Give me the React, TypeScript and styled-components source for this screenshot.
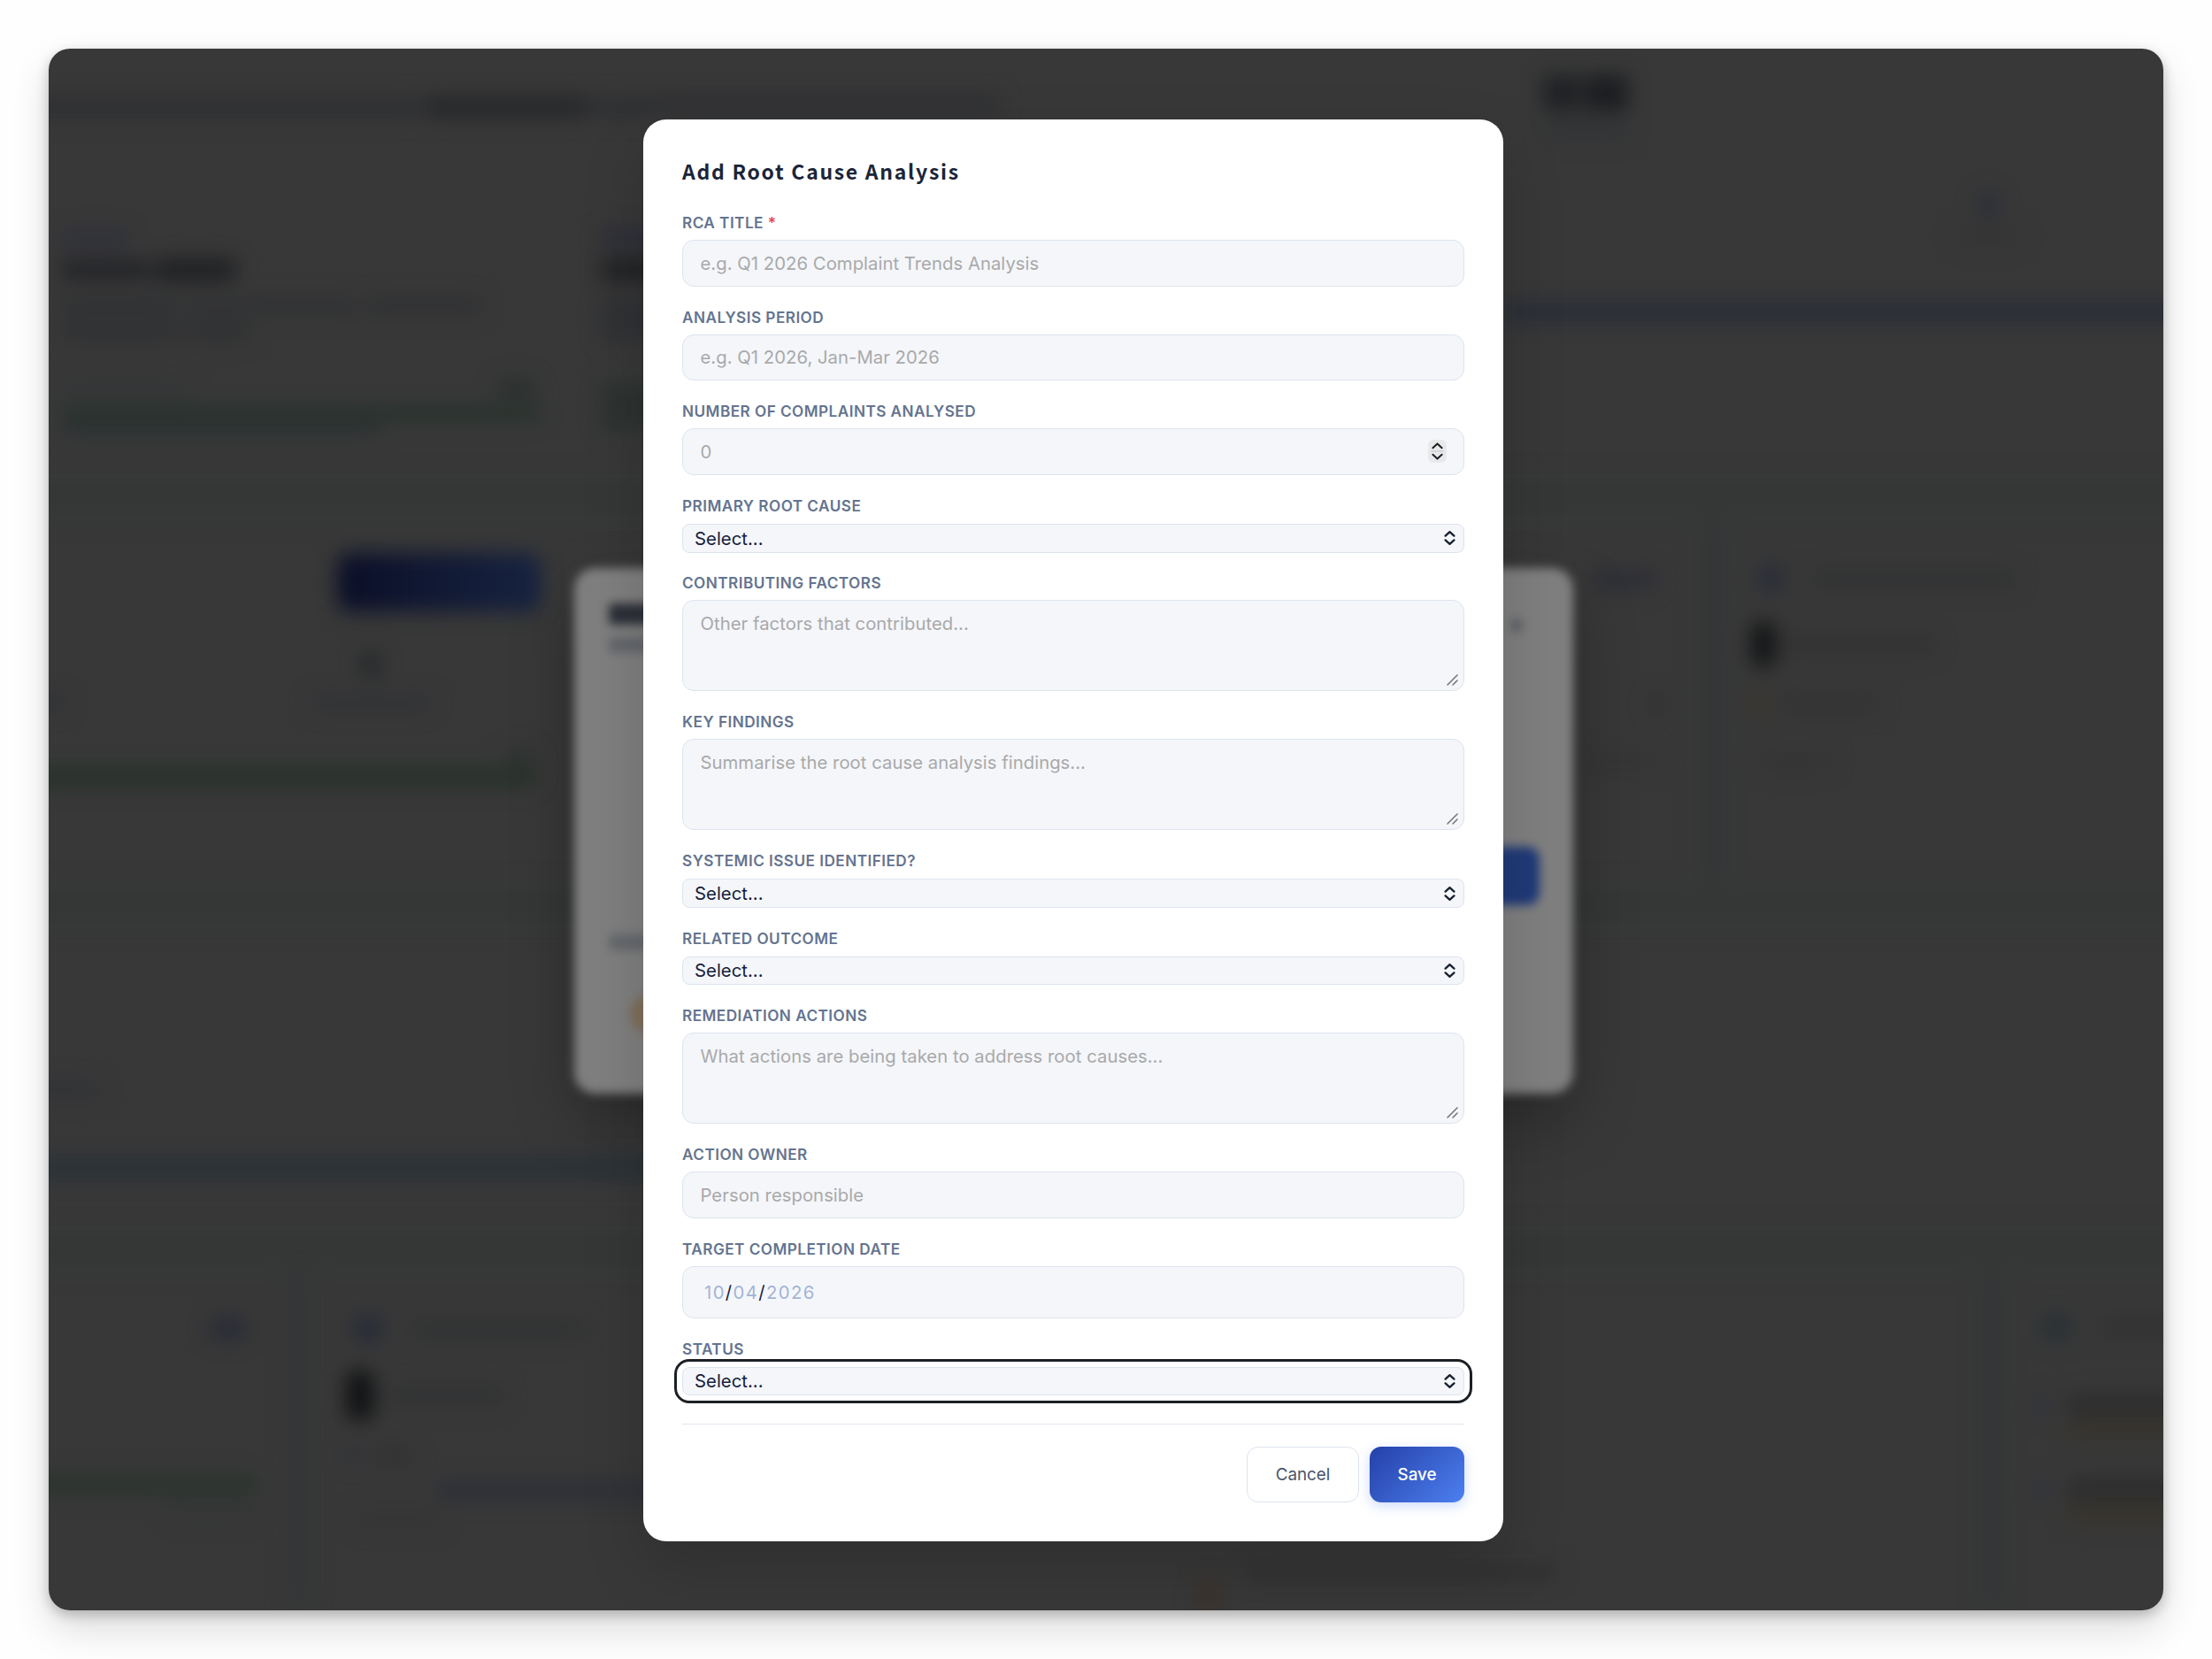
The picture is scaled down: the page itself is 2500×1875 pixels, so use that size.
import styled, { createGlobalStyle } from "styled-components"

const GlobalStyle = createGlobalStyle`
    *, *::before, *::after {
        box-sizing: border-box;
    }

    body {
        margin: 0;
        background: #fefefe;
        font-family: Inter, "Liberation Sans", sans-serif;
    }
`

const Page = styled.main`
    width: 2500px;
    height: 1875px;
    padding: 55px;
    overflow: hidden;
`

const Frame = styled.div`
    position: relative;
    width: 2390px;
    height: 1765px;
    border-radius: 24px;
    box-shadow:
        0 20px 44px rgba(0, 0, 0, 0.14),
        0 5px 14px rgba(0, 0, 0, 0.22);
`

const Clip = styled.div`
    position: relative;
    height: 100%;
    border-radius: 24px;
    background: #383838;
    overflow: hidden;
`

/* ---- dashboard behind the dialogs ---- */

const Board = styled.div`
    display: flex;
    width: 2390px;
    height: 1765px;
    filter: blur(11px);
`

const Side = styled.div<{ $w: number }>`
    flex: none;
    width: ${(p) => p.$w}px;
    display: flex;
    flex-direction: column;
`

const Band = styled.div<{ $h: number }>`
    flex: none;
    height: ${(p) => p.$h}px;
    display: flex;
`

// bleeds past the frame so the blur stays even at the edges
const Gutter = styled.div`
    flex: none;
    height: 45px;
    margin: 0 -40px;
    background: #353737;
`

const Seam = styled.div`
    flex: none;
    width: 26px;
    background: #343637;
`

const Panel = styled.div<{ $w: number; $pl?: number }>`
    flex: none;
    width: ${(p) => p.$w}px;
    padding-left: ${(p) => p.$pl ?? 0}px;
    overflow: visible;
`

const Line = styled.div<{ $top: number; $h: number }>`
    display: flex;
    align-items: center;
    height: ${(p) => p.$h}px;
    margin-top: ${(p) => p.$top}px;
`

const Smudge = styled.div<{ $w: number; $c: string; $ml?: number; $h?: number; $r?: number }>`
    flex: none;
    width: ${(p) => p.$w}px;
    height: ${(p) => (p.$h ? `${p.$h}px` : "100%")};
    margin-left: ${(p) => p.$ml ?? 0}px;
    border-radius: ${(p) => p.$r ?? 4}px;
    background: ${(p) => p.$c};
`

const LowerDialog = styled.div`
    position: absolute;
    left: 594px;
    top: 587px;
    width: 1129px;
    height: 594px;
    display: flex;
    justify-content: space-between;
    border-radius: 24px;
    background: #7f7f7f;
    box-shadow: 0 30px 70px rgba(0, 0, 0, 0.28);
    filter: blur(5.5px);
`

/* ---- modal ---- */

const Modal = styled.section`
    position: absolute;
    left: 672px;
    top: 80px;
    width: 972px;
    height: 1607px;
    padding: 44px;
    border-radius: 26px;
    background: #fff;
    box-shadow: 0 28px 70px rgba(0, 0, 0, 0.16);
`

const Title = styled.h2`
    margin: 0;
    height: 62px;
    line-height: 29px;
    font-family: "Noto Sans CJK SC", "Open Sans", sans-serif;
    font-size: 23px;
    font-weight: 700;
    letter-spacing: 1.7px;
    color: #1b2538;
`

const Field = styled.div`
    margin-bottom: 24px;
`

const Label = styled.label`
    display: block;
    height: 22px;
    margin-bottom: 8px;
    line-height: 22px;
    font-size: 17.2px;
    font-weight: 600;
    letter-spacing: 0.45px;
    color: #64748f;
`

const Required = styled.span`
    color: #e5484d;
`

const Input = styled.div<{ $h?: number }>`
    display: flex;
    align-items: center;
    justify-content: space-between;
    height: ${(p) => p.$h ?? 52.6}px;
    padding: 0 19.5px;
    border: 1.5px solid #dde4ee;
    border-radius: 13px;
    background: #f4f6fa;
    font-size: 20.3px;
    letter-spacing: 0.03px;
    color: #a9a9a9;
`

const TextArea = styled(Input)`
    height: 103px;
    align-items: flex-start;
    padding: 11px 6px 5px 19.5px;
    line-height: 29px;
`

const Handle = styled.svg`
    align-self: flex-end;
    width: 13px;
    height: 13px;
`

const Select = styled(Input)<{ $focused?: boolean }>`
    height: 32.8px;
    margin-top: 9px;
    margin-bottom: 23.6px;
    padding: 0 9px 0 13px;
    border-radius: 8px;
    color: #16203a;
    outline: ${(p) => (p.$focused ? "3px solid #1b2025" : "none")};
    outline-offset: 6.5px;
`

const SelectField = styled(Field)`
    margin-bottom: 0;
`

const Stepper = styled.span`
    display: flex;
    flex-direction: column;
    justify-content: center;
    align-items: center;
    width: 21px;
    height: 26px;
    border-radius: 6px;
    background: #e8e9eb;
`

const DateText = styled.span`
    margin-left: 4.5px;
    letter-spacing: 1.4px;
    color: #a3b4d4;
`

const Slash = styled.span`
    color: #16203a;
`

const Footer = styled.footer`
    display: flex;
    justify-content: flex-end;
    gap: 12px;
    margin-top: 32px;
    padding-top: 25px;
    border-top: 1.5px solid #dfe5ee;
`

const Button = styled.button<{ $primary?: boolean }>`
    width: ${(p) => (p.$primary ? 107 : 127)}px;
    height: 63px;
    padding: 0;
    border: ${(p) => (p.$primary ? "none" : "1.5px solid #dde4ee")};
    border-radius: 13px;
    background: ${(p) => (p.$primary ? "linear-gradient(135deg, #2540a8, #4c80f0)" : "#fff")};
    box-shadow: ${(p) => (p.$primary ? "0 4px 14px rgba(59, 110, 240, 0.26)" : "none")};
    font-family: inherit;
    font-size: 18.8px;
    font-weight: ${(p) => (p.$primary ? 500 : 400)};
    color: ${(p) => (p.$primary ? "#fff" : "#475569")};
`

const Chevrons = () => (
    <svg width="13" height="18" viewBox="0 0 13 18" fill="none" stroke="#16202f" strokeWidth="2.3" strokeLinecap="round" strokeLinejoin="round">
        <path d="M1.6 6.6L6.5 2.1L11.4 6.6M1.6 11.4L6.5 15.9L11.4 11.4" />
    </svg>
)

const StepperIcon = () => (
    <Stepper>
        <svg width="15" height="22" viewBox="0 0 15 22" fill="none" strokeLinecap="round" strokeLinejoin="round">
            <path d="M1 11H14" stroke="#cfd0d2" strokeWidth="1.3" />
            <path d="M2.4 7.2L7.5 2.4L12.6 7.2M2.4 14.8L7.5 19.6L12.6 14.8" stroke="#1f1f1f" strokeWidth="2" />
        </svg>
    </Stepper>
)

const TextAreaBox = ({ text }: { text: string }) => (
    <TextArea>
        <span>{text}</span>
        <Handle viewBox="0 0 13 13" stroke="#787878" strokeWidth="1.6" strokeLinecap="round">
            <path d="M1 12L12 1M7 12L12 7" />
        </Handle>
    </TextArea>
)

type FieldDef = {
    label: string
    kind: "text" | "number" | "select" | "area" | "date"
    text?: string
    required?: boolean
    focused?: boolean
}

const fields: FieldDef[] = [
    { label: "RCA TITLE", kind: "text", text: "e.g. Q1 2026 Complaint Trends Analysis", required: true },
    { label: "ANALYSIS PERIOD", kind: "text", text: "e.g. Q1 2026, Jan-Mar 2026" },
    { label: "NUMBER OF COMPLAINTS ANALYSED", kind: "number", text: "0" },
    { label: "PRIMARY ROOT CAUSE", kind: "select" },
    { label: "CONTRIBUTING FACTORS", kind: "area", text: "Other factors that contributed..." },
    { label: "KEY FINDINGS", kind: "area", text: "Summarise the root cause analysis findings..." },
    { label: "SYSTEMIC ISSUE IDENTIFIED?", kind: "select" },
    { label: "RELATED OUTCOME", kind: "select" },
    { label: "REMEDIATION ACTIONS", kind: "area", text: "What actions are being taken to address root causes..." },
    { label: "ACTION OWNER", kind: "text", text: "Person responsible" },
    { label: "TARGET COMPLETION DATE", kind: "date" },
    { label: "STATUS", kind: "select", focused: true },
]

const Control = ({ field }: { field: FieldDef }) => {
    switch (field.kind) {
        case "area":
            return <TextAreaBox text={field.text ?? ""} />
        case "select":
            return (
                <Select $focused={field.focused}>
                    <span>Select...</span>
                    <Chevrons />
                </Select>
            )
        case "date":
            return (
                <Input $h={59}>
                    <DateText>
                        10<Slash>/</Slash>04<Slash>/</Slash>2026
                    </DateText>
                </Input>
            )
        default:
            return (
                <Input>
                    <span>{field.text}</span>
                    {field.kind === "number" && <StepperIcon />}
                </Input>
            )
    }
}

const LeftSide = () => (
    <Side $w={672}>
        <Band $h={485}>
            <Panel $w={585}>
                <Line $top={54} $h={24}>
                    <Smudge $w={460} $ml={-40} $c="#2f3032" />
                    <Smudge $w={185} $ml={5} $c="#27282b" />
                    <Smudge $w={62} $ml={5} $c="#2f3033" />
                </Line>
                <Line $top={127} $h={18}>
                    <Smudge $w={74} $ml={15} $c="#2f303a" />
                </Line>
                <Line $top={14} $h={26}>
                    <Smudge $w={100} $ml={15} $c="#232428" $h={22} />
                    <Smudge $w={90} $ml={6} $c="#202124" />
                </Line>
                <Line $top={18} $h={20}>
                    <Smudge $w={130} $ml={15} $c="#303133" />
                    <Smudge $w={200} $ml={8} $c="#313234" />
                    <Smudge $w={130} $ml={7} $c="#303133" />
                </Line>
                <Line $top={9} $h={20}>
                    <Smudge $w={130} $ml={15} $c="#303133" />
                    <Smudge $w={74} $ml={8} $c="#303133" />
                </Line>
                <Line $top={44} $h={20}>
                    <Smudge $w={145} $ml={15} $c="#323436" $h={14} />
                    <Smudge $w={44} $ml={347} $c="#2a302e" />
                </Line>
                <Line $top={11} $h={15}>
                    <Smudge $w={540} $ml={15} $c="#25322b" />
                </Line>
                <Line $top={0} $h={18}>
                    <Smudge $w={360} $ml={15} $c="#2f3234" />
                </Line>
            </Panel>
            <Panel $w={87} $pl={40}>
                <Line $top={205} $h={18}>
                    <Smudge $w={74} $c="#2c2d39" />
                </Line>
                <Line $top={14} $h={26}>
                    <Smudge $w={80} $c="#202124" />
                </Line>
                <Line $top={18} $h={50}>
                    <Smudge $w={80} $c="#303134" />
                </Line>
                <Line $top={46} $h={56}>
                    <Smudge $w={80} $c="#2d3231" />
                </Line>
            </Panel>
        </Band>
        <Gutter />
        <Band $h={415}>
            <Panel $w={672}>
                <Line $top={40} $h={66}>
                    <Smudge $w={230} $ml={326} $r={14} $c="linear-gradient(90deg, #0b0f28, #172340)" />
                </Line>
                <Line $top={46} $h={28}>
                    <Smudge $w={20} $ml={354} $c="#242729" />
                </Line>
                <Line $top={20} $h={18}>
                    <Smudge $w={60} $ml={-40} $c="#313236" />
                    <Smudge $w={136} $ml={276} $c="#313236" />
                </Line>
                <Line $top={44} $h={20}>
                    <Smudge $w={34} $ml={516} $c="#2f3331" />
                </Line>
                <Line $top={2} $h={20}>
                    <Smudge $w={590} $ml={-40} $c="#26322a" />
                </Line>
            </Panel>
        </Band>
        <Gutter />
        <Band $h={345}>
            <Panel $w={672}>
                <Line $top={178} $h={18}>
                    <Smudge $w={98} $ml={-40} $c="#313237" />
                </Line>
                <Line $top={69} $h={20}>
                    <Smudge $w={730} $ml={-40} $c="#273137" />
                </Line>
            </Panel>
        </Band>
        <Gutter />
        <Band $h={385}>
            <Panel $w={270}>
                <Line $top={54} $h={26}>
                    <Smudge $w={44} $ml={181} $r={12} $c="#2a2c37" />
                </Line>
                <Line $top={153} $h={20}>
                    <Smudge $w={275} $ml={-40} $c="#2a342d" />
                </Line>
                <Line $top={9} $h={18}>
                    <Smudge $w={100} $ml={135} $c="#333534" />
                </Line>
            </Panel>
            <Seam />
            <Panel $w={376} $pl={40}>
                <Line $top={50} $h={34}>
                    <Smudge $w={32} $ml={9} $r={12} $c="#292c38" />
                    <Smudge $w={200} $ml={30} $h={20} $c="#313233" />
                </Line>
                <Line $top={30} $h={56}>
                    <Smudge $w={32} $r={10} $c="#121315" />
                    <Smudge $w={130} $ml={18} $h={20} $c="#313233" />
                </Line>
                <Line $top={30} $h={20}>
                    <Smudge $w={18} $r={9} $c="#2e303a" />
                    <Smudge $w={44} $ml={14} $c="#323233" />
                </Line>
                <Line $top={20} $h={19}>
                    <Smudge $w={270} $ml={102} $c="#2d2f38" />
                </Line>
                <Line $top={14} $h={18}>
                    <Smudge $w={100} $ml={8} $c="#343434" />
                </Line>
            </Panel>
        </Band>
    </Side>
)

const CenterSide = () => (
    <Side $w={972}>
        <Line $top={54} $h={24}>
            <Smudge $w={404} $c="#2f3033" />
        </Line>
        <Line $top={1642} $h={20}>
            <Smudge $w={350} $ml={683} $c="#2f2f2f" />
        </Line>
        <Line $top={1} $h={44}>
            <Smudge $w={24} $ml={627} $c="#3b3229" />
        </Line>
    </Side>
)

const RightSide = () => (
    <Side $w={746}>
        <Band $h={485}>
            <Panel $w={746}>
                <Line $top={30} $h={40}>
                    <Smudge $w={38} $ml={45} $c="#1f2124" />
                    <Smudge $w={12} $c="#2a2b2d" />
                    <Smudge $w={46} $c="#1b1d20" />
                </Line>
                <Line $top={12} $h={20}>
                    <Smudge $w={94} $ml={46} $c="#313335" />
                </Line>
                <Line $top={60} $h={30}>
                    <Smudge $w={26} $ml={535} $r={12} $c="#2d2f38" />
                </Line>
                <Line $top={10} $h={20}>
                    <Smudge $w={74} $ml={511} $c="#343434" />
                </Line>
                <Line $top={66} $h={20}>
                    <Smudge $w={800} $c="#272c38" />
                </Line>
            </Panel>
        </Band>
        <Gutter />
        <Band $h={415}>
            <Panel $w={222}>
                <Line $top={58} $h={24}>
                    <Smudge $w={74} $ml={100} $r={12} $c="#2e2f37" />
                </Line>
                <Line $top={118} $h={22}>
                    <Smudge $w={18} $ml={166} $c="#303031" />
                </Line>
                <Line $top={44} $h={18}>
                    <Smudge $w={90} $ml={90} $c="#343434" />
                </Line>
            </Panel>
            <Seam />
            <Panel $w={498} $pl={32}>
                <Line $top={52} $h={34}>
                    <Smudge $w={30} $ml={8} $r={12} $c="#2b2e38" />
                    <Smudge $w={230} $ml={32} $h={20} $c="#313233" />
                </Line>
                <Line $top={32} $h={50}>
                    <Smudge $w={28} $r={8} $c="#141517" />
                    <Smudge $w={170} $ml={10} $h={20} $c="#323232" />
                </Line>
                <Line $top={32} $h={20}>
                    <Smudge $w={18} $r={9} $c="#3e3529" />
                    <Smudge $w={114} $ml={12} $c="#333333" />
                </Line>
                <Line $top={45} $h={20}>
                    <Smudge $w={88} $ml={4} $c="#343434" />
                </Line>
            </Panel>
        </Band>
        <Gutter />
        <Band $h={345} />
        <Gutter />
        <Band $h={385}>
            <Panel $w={540} />
            <Seam />
            <Panel $w={180} $pl={34}>
                <Line $top={48} $h={34}>
                    <Smudge $w={32} $ml={9} $r={12} $c="#2a3135" />
                    <Smudge $w={150} $ml={29} $h={20} $c="#323233" />
                </Line>
                <Line $top={60} $h={22}>
                    <Smudge $w={18} $ml={-2} $r={9} $c="#2e313b" />
                    <Smudge $w={160} $ml={22} $c="#2c2c2d" />
                </Line>
                <Line $top={6} $h={20}>
                    <Smudge $w={150} $ml={38} $c="#37332c" />
                </Line>
                <Line $top={47} $h={22}>
                    <Smudge $w={18} $ml={-2} $r={9} $c="#2e313b" />
                    <Smudge $w={160} $ml={22} $c="#2c2c2d" />
                </Line>
                <Line $top={6} $h={20}>
                    <Smudge $w={150} $ml={38} $c="#37332c" />
                </Line>
            </Panel>
        </Band>
    </Side>
)

const UnderDialog = () => (
    <LowerDialog>
        <Panel $w={120} $pl={39}>
            <Line $top={40} $h={24}>
                <Smudge $w={80} $c="#2c2f38" />
            </Line>
            <Line $top={14} $h={18}>
                <Smudge $w={80} $c="#63666b" />
            </Line>
            <Line $top={318} $h={18}>
                <Smudge $w={80} $c="#65686c" />
            </Line>
            <Line $top={50} $h={44}>
                <Smudge $w={55} $ml={24} $r={22} $c="#7f6e5a" />
            </Line>
        </Panel>
        <Panel $w={120}>
            <Line $top={57} $h={15}>
                <Smudge $w={12} $ml={50} $c="#5b5e63" />
            </Line>
            <Line $top={243} $h={66}>
                <Smudge $w={82} $r={14} $c="#203a78" />
            </Line>
        </Panel>
    </LowerDialog>
)

const App = () => (
    <Page>
        <GlobalStyle />
        <Frame>
            <Clip>
                <Board>
                    <LeftSide />
                    <CenterSide />
                    <RightSide />
                </Board>
                <UnderDialog />
                <Modal>
                    <Title>Add Root Cause Analysis</Title>
                    {fields.map((field) => {
                        const Wrap = field.kind === "select" ? SelectField : Field
                        return (
                            <Wrap key={field.label}>
                                <Label>
                                    {field.label}
                                    {field.required && <Required> *</Required>}
                                </Label>
                                <Control field={field} />
                            </Wrap>
                        )
                    })}
                    <Footer>
                        <Button>Cancel</Button>
                        <Button $primary>Save</Button>
                    </Footer>
                </Modal>
            </Clip>
        </Frame>
    </Page>
)

export default App
